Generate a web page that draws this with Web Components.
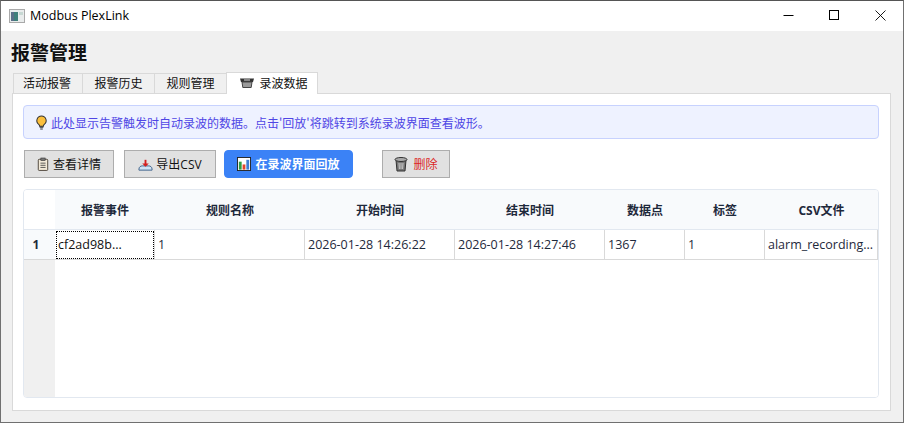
<!DOCTYPE html>
<html lang="zh"><head><meta charset="utf-8"><title>Modbus PlexLink</title>
<style>
html,body{margin:0;padding:0;height:100%;overflow:hidden}
body{font-family:"Noto Sans","Noto Sans CJK SC",sans-serif;font-size:12px;color:#000}
</style></head><body>
<app-window>
  <title-bar slot="title">Modbus PlexLink</title-bar>
  <page-heading>报警管理</page-heading>
  <tab-bar>
    <tab-item w="70" style="padding-right:2px">活动报警</tab-item>
    <tab-item w="73">报警历史</tab-item>
    <tab-item w="73">规则管理</tab-item>
    <tab-item w="92" selected style="padding-left:3px"><svg slot="icon" width="16" height="12" viewBox="0 0 16 12" style="margin-right:4px"><path d="M1 1.500h14l-1 3.500H2z" fill="#333"/><path d="M3 5h10l-.8 5.500H3.800z" fill="#9a9a9a" stroke="#444" stroke-width="1"/><path d="M5 3h6" stroke="#ddd" stroke-width="1"/></svg>录波数据</tab-item>
  </tab-bar>
  <tab-panel>
    <info-banner><svg slot="icon" width="13" height="17" viewBox="0 0 14 16"><path d="M7 1a5 5 0 0 0-3 9c.6.5 1 1.200 1 2h4c0-.8.4-1.500 1-2a5 5 0 0 0-3-9z" fill="#fbbf3c" stroke="#333" stroke-width="1.100"/><path d="M5 13h4M5.600 15h2.800" stroke="#333" stroke-width="1.200"/></svg>此处显示告警触发时自动录波的数据。点击'回放'将跳转到系统录波界面查看波形。</info-banner>
    <tool-bar>
      <tool-btn w="90"><svg slot="icon" width="12" height="16" viewBox="0 0 14 16"><rect x="1.500" y="2.500" width="11" height="13" rx="1" fill="#f3ead8" stroke="#3d3429"/><rect x="4.500" y="1" width="5" height="3" fill="#777" stroke="#333" stroke-width=".7"/><path d="M4 7h6M4 9.500h6M4 12h6" stroke="#444"/></svg>查看详情</tool-btn>
      <tool-btn w="92"><svg slot="icon" width="15" height="15" viewBox="0 0 16 16" style="margin-right:3px"><path d="M1 13c0-2.500 2-3.500 3.500-3.500h7c1.500 0 3.500 1 3.500 3.500v1H1z" fill="#cfe3f5" stroke="#3b5f86"/><path d="M8 3v6" stroke="#d31f1f" stroke-width="2"/><path d="M4.500 7h7L8 10.500z" fill="#d31f1f"/></svg>导出CSV</tool-btn>
      <tool-btn w="129" primary><svg slot="icon" width="14" height="14" viewBox="0 0 15 15"><rect x=".5" y=".5" width="14" height="14" fill="#fff" stroke="#222"/><rect x="2" y="5" width="3" height="8.500" fill="#2e9e44"/><rect x="6" y="8" width="3" height="5.500" fill="#e0452b"/><rect x="10" y="3" width="3" height="10.500" fill="#3d7fd6"/></svg>在录波界面回放</tool-btn>
      <tool-btn w="68" danger style="margin-left:21px"><svg slot="icon" width="14" height="16" viewBox="0 0 14 16" style="margin-right:5px"><path d="M2 4h10l-1 11H3z" fill="#777" stroke="#333"/><ellipse cx="7" cy="3.500" rx="6" ry="2" fill="#aaa" stroke="#333"/><path d="M5 7l.4 6M7 7v6M9 7l-.4 6" stroke="#ccc"/></svg>删除</tool-btn>
    </tool-bar>
    <data-table></data-table>
  </tab-panel>
</app-window>
<script>
function def(name, css, html, init){
  customElements.define(name, class extends HTMLElement{
    constructor(){super();const s=this.attachShadow({mode:'open'});s.innerHTML='<style>'+css+'</style>'+html;}
    connectedCallback(){if(init)init(this,this.shadowRoot);}
  });
}
const setW=(el)=>{el.style.width=el.getAttribute('w')+'px'};
const UI='"Open Sans","Noto Sans CJK SC",sans-serif';
def('app-window',`:host{display:flex;flex-direction:column;box-sizing:border-box;width:904px;height:423px;border:1px solid #707070;border-top-color:#555;background:#f0f0f0}
.b{flex:1;min-height:0;display:flex;flex-direction:column;padding:0 12px 11px 11px}`,`<slot name="title"></slot><div class="b"><slot></slot></div>`);
def('title-bar',`:host{display:flex;align-items:center;height:30px;background:#fff;flex:none;font:12.5px/1 "Open Sans","Noto Sans",sans-serif}
.ic{margin:0 5px 0 8px;display:block}
.t{flex:1}
.c{box-sizing:border-box;width:46px;height:30px;padding-bottom:2px;display:flex;align-items:center;justify-content:center}`,
`<svg class="ic" width="16" height="14" viewBox="0 0 16 14"><rect x=".5" y=".5" width="15" height="13" fill="#e9ecec" stroke="#a9a9a9"/><rect x="2" y="3" width="7" height="9" fill="#3f7f7a"/><rect x="2" y="3" width="3" height="9" fill="#5a6f88"/><rect x="10" y="3" width="4" height="3" fill="#c7d8d3"/></svg><span class="t"><slot></slot></span>
<span class="c"><svg width="11" height="11" viewBox="0 0 11 11"><path d="M.5 5.500h10" stroke="#000"/></svg></span>
<span class="c"><svg width="11" height="11" viewBox="0 0 11 11"><rect x=".5" y=".5" width="9" height="9" fill="none" stroke="#000"/></svg></span>
<span class="c"><svg width="11" height="11" viewBox="0 0 11 11"><path d="M.5.500l10 10M10.500.500l-10 10" stroke="#000" stroke-width=".9"/></svg></span>`);
def('page-heading',`:host{display:block;margin-top:9px;height:24px;font:700 19px/24px "Noto Sans CJK SC",sans-serif;color:#111;margin-left:-1px}`,`<slot></slot>`);
def('tab-bar',`:host{display:flex;align-items:flex-end;height:21px;margin:8px 0 0 1px;position:relative;z-index:1}`,`<slot></slot>`);
def('tab-item',`:host{display:flex;align-items:center;justify-content:center;box-sizing:border-box;height:20px;padding-bottom:2px;background:#f0f0f0;border:1px solid #d9d9d9;border-bottom:0;margin-right:-1px;font:12px "Noto Sans CJK SC",sans-serif;color:#111}
:host([selected]){height:22px;background:#fff;margin-bottom:-1px;margin-right:0}
::slotted(svg){display:block;margin-right:5px}`,`<slot name="icon"></slot><slot></slot>`,setW);
def('tab-panel',`:host{flex:1;min-height:0;display:flex;flex-direction:column;box-sizing:border-box;background:#fff;border:1px solid #d9d9d9;padding:11px 11px 11px 10px}`,`<slot></slot>`);
def('info-banner',`:host{display:flex;align-items:center;box-sizing:border-box;height:34px;padding:0 11px;background:#eef2ff;border:1px solid #c7d2fe;border-radius:4px;font:400 12px "Noto Sans CJK SC",sans-serif;color:#4f46e5}
::slotted(svg){display:block;margin-right:3px}`,`<slot name="icon"></slot><slot></slot>`);
def('tool-bar',`:host{display:flex;gap:10px;margin-top:11px;padding-left:1px}`,`<slot></slot>`);
def('tool-btn',`:host{display:flex;align-items:center;justify-content:center;box-sizing:border-box;height:28px;background:#e1e1e1;border:1px solid #adadad;font:12px ${UI};color:#111}
:host([primary]){background:#3b82f6;border-color:#3b82f6;border-radius:4px;color:#fff;font-weight:700;margin-left:-2px;margin-right:-2px}
:host([danger]){color:#dc2626}
::slotted(svg){display:block;margin-right:4px}`,`<slot name="icon"></slot><slot></slot>`,setW);
def('data-table',`:host{display:block;box-sizing:border-box;height:209px;margin-top:11px;border:1px solid #e2e8f0;border-radius:4px;background:#fff;overflow:hidden}
.g{display:grid;grid-template-columns:31px 100px 150px 150px 150px 80px 80px 113px;grid-template-rows:40px 30px 1fr;height:100%}
.h{display:flex;align-items:center;justify-content:center;background:#f8fafc;font:700 12px ${UI};color:#1e293b;border-bottom:1px solid #e2e8f0}
.corner{background:#fff}
.c{display:flex;align-items:center;box-sizing:border-box;padding-left:3px;overflow:hidden;white-space:nowrap;border-right:1px solid #d9d9d9;border-bottom:1px solid #d9d9d9;font:12.5px "Open Sans","Noto Sans",sans-serif;color:#1e293b}
.v{display:flex;align-items:center;justify-content:center;box-sizing:border-box;padding-right:7px;background:#f8fafc;font:700 12px "Open Sans",sans-serif;border-bottom:1px solid #d9d9d9;color:#1e293b}
.cur{outline:1px dotted #000;outline-offset:-2px;color:#111}
.rest{background:#f0f0f0}
.fill{grid-column:2 / -1;background:#fff}`,
`<div class="g">
<div class="h corner"></div><div class="h">报警事件</div><div class="h">规则名称</div><div class="h">开始时间</div><div class="h">结束时间</div><div class="h">数据点</div><div class="h">标签</div><div class="h">CSV文件</div>
<div class="v">1</div><div class="c cur">cf2ad98b...</div><div class="c">1</div><div class="c">2026-01-28 14:26:22</div><div class="c">2026-01-28 14:27:46</div><div class="c">1367</div><div class="c">1</div><div class="c">alarm_recording...</div>
<div class="rest"></div><div class="fill"></div>
</div>`);
</script>
</body></html>
